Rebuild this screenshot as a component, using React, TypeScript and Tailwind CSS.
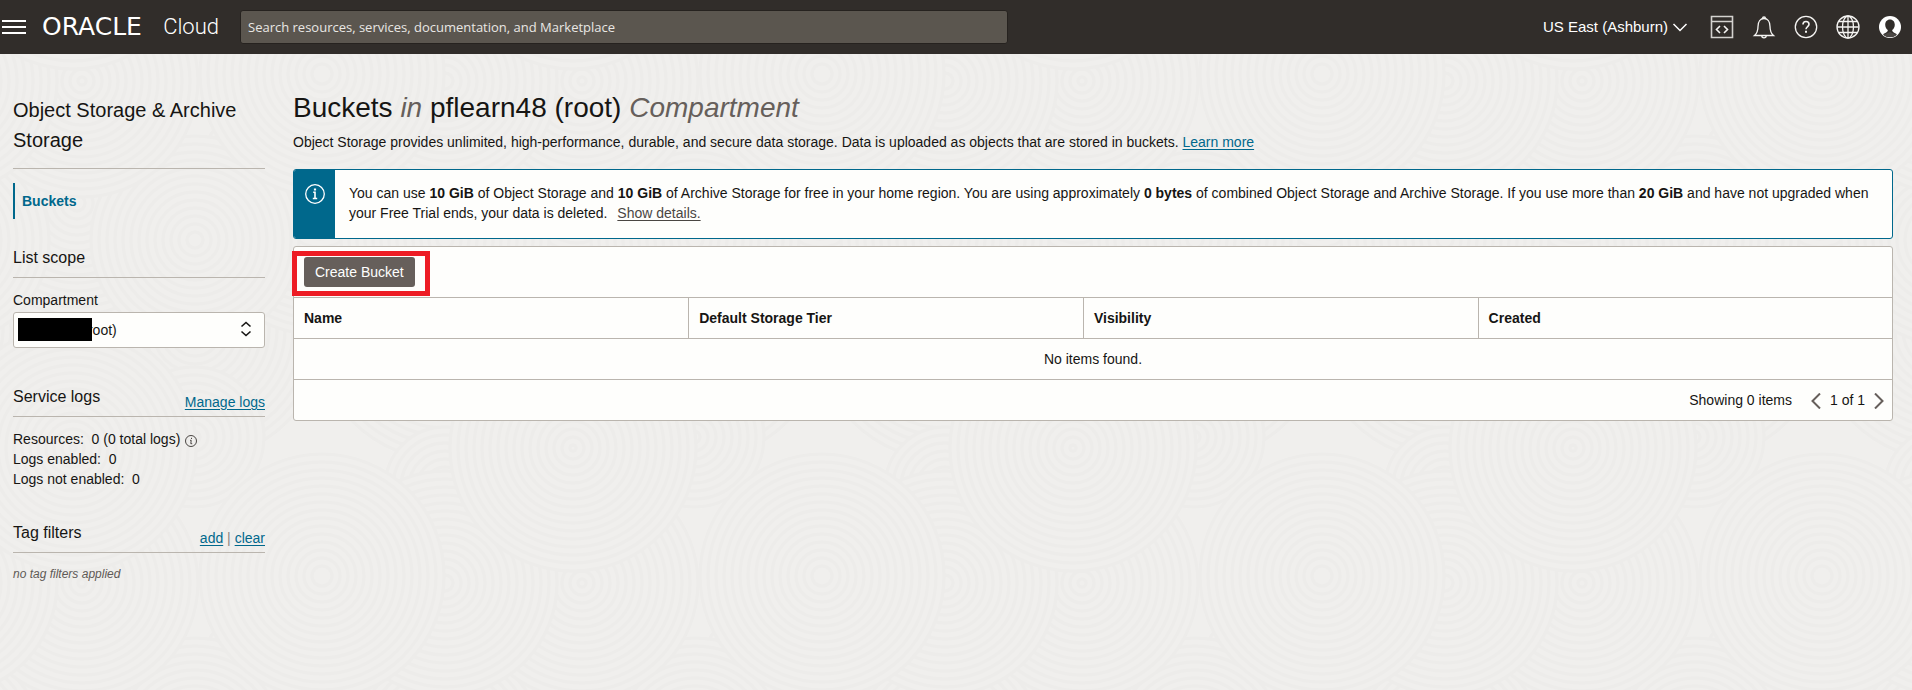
import React from "react";

type Disc = { x: number; y: number; r: number };

const TILE_W = 500;
const TILE_H = 502;
const RING_GAP = 8;

// Painted back to front; later discs cover earlier ones.
const DISCS: Disc[] = [
  { x: 195, y: 330, r: 130 },
  { x: 445, y: 330, r: 130 },
  { x: 320, y: 205, r: 130 },
  { x: 77, y: 203, r: 120 },
  { x: 195, y: 240, r: 104 },
  { x: 445, y: 240, r: 104 },
  { x: 445, y: 487, r: 60 },
  { x: 194, y: 437, r: 70 },
  { x: 82, y: 81, r: 116 },
  { x: 445, y: 81, r: 112 },
  { x: 322, y: 74, r: 122 },
  { x: 73, y: 448, r: 123 },
];

const SHIFTS = [-1, 0, 1];

function rings(disc: Disc) {
  const radii: number[] = [];
  for (let r = disc.r; r > 2; r -= RING_GAP) radii.push(r);
  return radii;
}

function Backdrop() {
  return (
    <svg className="absolute inset-0 h-full w-full" aria-hidden="true">
      <defs>
        <pattern id="rings" width={TILE_W} height={TILE_H} y={-54} patternUnits="userSpaceOnUse">
          {DISCS.map((disc, i) => (
            <g key={i}>
              {SHIFTS.map((sx) =>
                SHIFTS.map((sy) => (
                  <g key={`${sx}${sy}`} transform={`translate(${disc.x + sx * TILE_W} ${disc.y + sy * TILE_H})`}>
                    {rings(disc).map((r) => (
                      <circle key={r} r={r} fill="#f0efed" stroke="#edecea" strokeWidth="3" />
                    ))}
                  </g>
                )),
              )}
            </g>
          ))}
        </pattern>
      </defs>
      <rect width="100%" height="100%" fill="url(#rings)" />
    </svg>
  );
}

function Chevron({ d, weight }: { d: string; weight: number }) {
  return (
    <svg viewBox="0 0 16 16" className="size-4" fill="none" stroke="currentColor" strokeWidth={weight} aria-hidden="true">
      <path d={d} />
    </svg>
  );
}

function HeaderIcon({ label, children }: { label: string; children: React.ReactNode }) {
  return (
    <button type="button" aria-label={label} className="flex size-6 items-center justify-center">
      <svg viewBox="0 0 24 24" className="size-6" fill="none" stroke="#f5f4f2" strokeWidth="1.3">
        {children}
      </svg>
    </button>
  );
}

function Header() {
  return (
    <header className="flex h-[54px] items-center bg-[#312d2a] pr-[10px] text-white">
      <button type="button" aria-label="Navigation menu" className="ml-[2px]">
        <svg viewBox="0 0 24 16" className="h-4 w-6" stroke="white" strokeWidth="2">
          <path d="M0 2h24M0 8h24M0 14h24" />
        </svg>
      </button>
      <a href="#home" className="ml-4 flex w-[198px] items-center justify-between pr-[21px]">
        <span className="font-['DejaVu_Sans'] text-[25px] leading-6">ORACLE</span>
        <span className="font-['Roboto'] text-[22px] leading-6 font-light">Cloud</span>
      </a>
      <input
        type="search"
        aria-label="Search"
        placeholder="Search resources, services, documentation, and Marketplace"
        className="h-[34px] w-[768px] rounded-[3px] border border-[#26221f] bg-[#5b564f] px-[7px] font-['Open_Sans'] text-[13px] placeholder:text-[#e9e7e4]"
      />
      <div className="ml-auto flex items-center gap-[18px]">
        <button type="button" className="flex items-center gap-1 pr-1 text-[15px]">
          US East (Ashburn)
          <Chevron d="M1.500 5 8 11.500 14.500 5" weight={1.5} />
        </button>
        <HeaderIcon label="Developer tools">
          <path d="M1.500 1.500h21v21h-21zM1.500 6.500h21" stroke="#d4d2cf" strokeWidth="1.600" />
          <path d="m10 11-3.500 3.500L10 18M14 11l3.500 3.500L14 18" strokeWidth="1.600" />
        </HeaderIcon>
        <HeaderIcon label="Announcements">
          <path d="M2.500 20.500c3-2.500 3.500-5 3.500-9C6 6.500 8.500 3.500 12 3.500s6 3 6 8c0 4 .5 6.500 3.500 9z" />
          <path d="M10.500 3.500a1.500 1.500 0 1 1 3 0M9.800 20.800a2.200 2 0 0 0 4.400 0" />
        </HeaderIcon>
        <HeaderIcon label="Help">
          <circle cx="12" cy="12" r="10.700" />
          <path d="M9 9.500C9 7.600 10.300 6.500 12 6.500s3 1.100 3 2.800c0 2.200-3 2.300-3 5" strokeWidth="1.600" />
          <path d="M12 15.800v2" strokeWidth="2" />
        </HeaderIcon>
        <HeaderIcon label="Language">
          <circle cx="12" cy="12" r="11" />
          <ellipse cx="12" cy="12" rx="5.500" ry="11" />
          <path d="M12 1v22M1 12h22M3 6.500h18M3 17.500h18" />
        </HeaderIcon>
        <HeaderIcon label="Profile">
          <circle cx="12" cy="12" r="11" fill="white" stroke="none" />
          <path
            d="M12 4.500c-3 0-4.800 2.300-4.800 5.200 0 2.600 1.300 4.300 2.600 5.300 0 1.800-1 2.300-4.800 4.200 3.800 3.800 10.200 3.800 14 0-3.800-1.900-4.800-2.400-4.800-4.200 1.300-1 2.600-2.700 2.600-5.300 0-2.900-1.800-5.200-4.800-5.200z"
            fill="#312d2a"
            stroke="none"
          />
          <path d="M5.500 20c2-1.500 4-1.600 6.500-3.200 2.500 1.600 4.500 1.700 6.500 3.200-3.500 3-9.500 3-13 0z" fill="#4b4744" stroke="none" />
        </HeaderIcon>
      </div>
    </header>
  );
}

const LINK = "text-[#00688c] underline underline-offset-2";

function SectionHead({ title, children }: { title: string; children?: React.ReactNode }) {
  return (
    <div className="flex h-8 justify-between border-b border-[#bab5ae]">
      <h2 className="text-[16px] leading-6">{title}</h2>
      {children && <div className="pt-[7px] leading-5">{children}</div>}
    </div>
  );
}

function Sidebar() {
  return (
    <aside className="w-[252px] shrink-0 pt-[41px]">
      <h1 className="border-b border-[#bab5ae] pb-[13px] text-[20px] leading-[30px]">Object Storage &amp; Archive Storage</h1>
      <nav className="pt-[14px]">
        <a href="#buckets" className="flex h-9 items-center border-l-2 border-[#00688c] pl-[7px] font-bold text-[#00688c]">
          Buckets
        </a>
      </nav>

      <section className="pt-[27px]">
        <SectionHead title="List scope" />
        <label htmlFor="compartment" className="mt-3 block leading-5">
          Compartment
        </label>
        <div className="relative mt-[2px]">
          <select
            id="compartment"
            className="h-9 w-full appearance-none rounded-[3px] border border-[#bab5ae] bg-[#fefefc] px-[7px] text-[14px]"
          >
            <option>pflearn48 (root)</option>
          </select>
          <span className="absolute top-[6px] left-[5px] h-[23px] w-[74px] bg-black" />
          <svg
            viewBox="0 0 12 16"
            className="pointer-events-none absolute top-[9px] right-[13px] h-4 w-3"
            fill="none"
            stroke="#161513"
            strokeWidth="1.600"
            aria-hidden="true"
          >
            <path d="m1.500 5.500 4.500-4 4.500 4M1.500 10.500l4.500 4 4.500-4" />
          </svg>
        </div>
      </section>

      <section className="pt-[37px]">
        <SectionHead title="Service logs">
          <a href="#logs" className={LINK}>Manage logs</a>
        </SectionHead>
        <div className="pt-3 leading-5">
          <p className="flex items-center">
            Resources:&nbsp; 0 (0 total logs)
            <svg viewBox="0 0 12 12" className="mt-[3px] ml-[5px] size-3" fill="none" stroke="#4a4643" aria-hidden="true">
              <circle cx="6" cy="6" r="5.500" />
              <path d="M6.500 2.800v1.200M5 5.300h1.200L5.800 8.700H7.200" />
            </svg>
          </p>
          <p>Logs enabled:&nbsp; 0</p>
          <p>Logs not enabled:&nbsp; 0</p>
        </div>
      </section>

      <section className="pt-8">
        <SectionHead title="Tag filters">
          <a href="#add" className={LINK}>add</a>
          <span className="text-[#8a8580]"> | </span>
          <a href="#clear" className={LINK}>clear</a>
        </SectionHead>
        <p className="pt-[11px] text-[12px] leading-5 text-[#5f5a56] italic">no tag filters applied</p>
      </section>
    </aside>
  );
}

function FreeTierBanner() {
  return (
    <div className="flex overflow-hidden rounded-[3px] border border-[#00688c] bg-[#fefefc]">
      <div className="flex w-[41px] shrink-0 justify-center bg-[#00688c] pt-[14px]">
        <svg viewBox="0 0 20 20" className="size-5" fill="none" stroke="white" aria-hidden="true">
          <circle cx="10" cy="10" r="9.300" strokeWidth="1.300" />
          <path d="M10 4.500v2" strokeWidth="2.200" />
          <path d="M8.200 8.300H10v6M7.800 14.500h4.400" strokeWidth="1.600" />
        </svg>
      </div>
      <p className="px-[14px] pt-[13px] pb-[15px] leading-5">
        You can use <b>10 GiB</b> of Object Storage and <b>10 GiB</b> of Archive Storage for free in your home region. You
        are using approximately <b>0 bytes</b> of combined Object Storage and Archive Storage. If you use more than{" "}
        <b>20 GiB</b> and have not upgraded when your Free Trial ends, your data is deleted.
        <a href="#details" className="ml-[10px] text-[#4a4643] underline underline-offset-2">Show details.</a>
      </p>
    </div>
  );
}

const COLUMNS = ["Name", "Default Storage Tier", "Visibility", "Created"];

function BucketTable() {
  return (
    <div className="mt-[7px] rounded-[3px] border border-[#bab5ae] bg-[#fefefc]">
      <div className="flex h-[50px] items-start px-[10px] pt-[10px]">
        <div className="relative">
          <button type="button" className="block h-[30px] rounded-[3px] bg-[#665f5b] px-[11px] text-white">
            Create Bucket
          </button>
          <span className="pointer-events-none absolute -top-[6px] -right-[15px] -bottom-[9px] -left-3 border-5 border-[#ed1c24]" />
        </div>
      </div>
      <table className="w-full table-fixed border-collapse text-left">
        <colgroup>
          <col className="w-[24.7%]" />
          <col className="w-[24.7%]" />
          <col className="w-[24.7%]" />
          <col />
        </colgroup>
        <thead>
          <tr className="h-[41px] border-y border-[#bab5ae]">
            {COLUMNS.map((name) => (
              <th key={name} className="border-r border-[#bab5ae] px-[10px] font-bold last:border-r-0">
                {name}
              </th>
            ))}
          </tr>
        </thead>
        <tbody>
          <tr className="h-[41px] border-b border-[#bab5ae]">
            <td colSpan={4} className="text-center">
              No items found.
            </td>
          </tr>
        </tbody>
      </table>
      <div className="flex h-10 items-center justify-end pr-[5px]">
        <span className="pr-4">Showing 0 items</span>
        <button type="button" aria-label="Previous page" className="pt-[2px] text-[#665f5b]">
          <Chevron d="m12 .5-7.500 7.500 7.500 7.500" weight={2} />
        </button>
        <span className="px-[6px]">1 of 1</span>
        <button type="button" aria-label="Next page" className="pt-[2px] text-[#665f5b]">
          <Chevron d="m4 .5 7.500 7.500-7.500 7.500" weight={2} />
        </button>
      </div>
    </div>
  );
}

export default function App() {
  return (
    <div className="flex min-h-screen flex-col bg-[#f0efed] font-['Liberation_Sans',Arial,sans-serif] text-[14px] leading-5 text-[#161513]">
      <Header />
      <div className="relative flex-1">
        <Backdrop />
        <div className="relative flex gap-7 pr-[19px] pb-6 pl-[13px]">
          <Sidebar />
          <main className="min-w-0 flex-1 pt-9">
            <h1 className="text-[28px] leading-9">
              Buckets <i className="text-[#665f5b]">in</i> pflearn48 (root) <i className="text-[#665f5b]">Compartment</i>
            </h1>
            <p className="mt-[6px] mb-[17px] leading-5">
              Object Storage provides unlimited, high-performance, durable, and secure data storage. Data is uploaded as
              objects that are stored in buckets. <a href="#learn" className={LINK}>Learn more</a>
            </p>
            <FreeTierBanner />
            <BucketTable />
          </main>
        </div>
      </div>
    </div>
  );
}
